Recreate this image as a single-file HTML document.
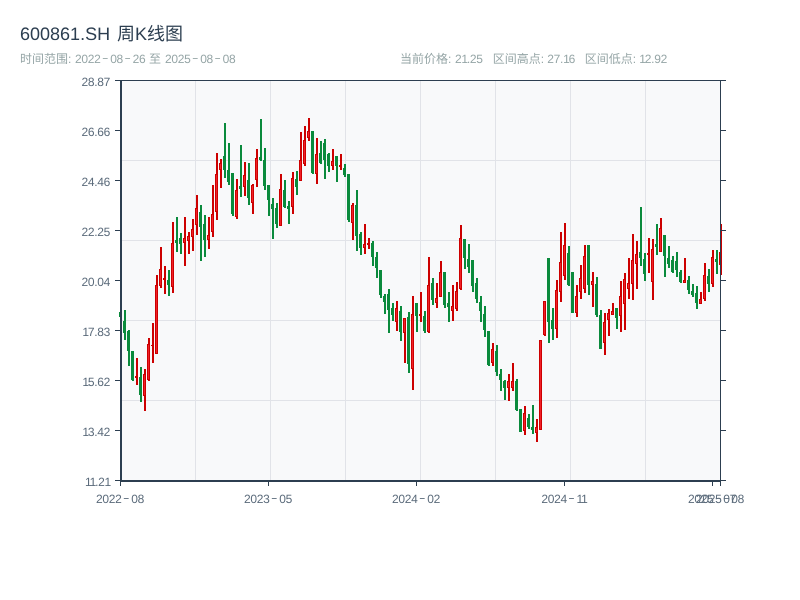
<!DOCTYPE html>
<html><head><meta charset="utf-8">
<style>
html,body{margin:0;padding:0;background:#fff;width:800px;height:600px;overflow:hidden}
svg{display:block}
text{font-family:"Liberation Sans","Noto Sans CJK SC",sans-serif;text-rendering:geometricPrecision}
.n{letter-spacing:-.3px}
.o{letter-spacing:-1.2px}
.h{font-family:"IPAGothic",sans-serif;letter-spacing:2px}
.s{font-size:12px;fill:#95a5a6}
</style></head>
<body>
<svg id="c" xmlns="http://www.w3.org/2000/svg" width="800" height="600" viewBox="0 0 800 600">
<defs><clipPath id="clip"><rect x="118" y="80" width="604" height="402"/></clipPath></defs>
<text x="20" y="40" font-size="18" fill="#2c3e50">600861.SH</text>
<text x="117" y="40" font-size="18" fill="#2c3e50">周K线图</text>
<text x="20" y="63" class="s">时间范围:</text>
<text x="75" y="63" class="s n">2022<tspan class="h" dx="1.7">-</tspan>08<tspan class="h" dx="1.7">-</tspan>26</text>
<text x="149" y="63" class="s">至</text>
<text x="165" y="63" class="s n">2025<tspan class="h" dx="1.7">-</tspan>08<tspan class="h" dx="1.7">-</tspan>08</text>
<text x="400" y="63" class="s">当前价格:</text>
<text x="455" y="63" class="s n">2<tspan class="o">1</tspan>.25</text>
<text x="492.7" y="63" class="s">区间高点:</text>
<text x="547.3" y="63" class="s n">27.<tspan class="o">1</tspan>6</text>
<text x="584.7" y="63" class="s">区间低点:</text>
<text x="639.3" y="63" class="s n"><tspan class="o">1</tspan>2.92</text>
<rect x="120" y="80" width="600" height="400" fill="#f8f9fa"/>
<path d="M120 160.5H720M120 240.5H720M120 320.5H720M120 400.5H720M195.5 80V480M270.5 80V480M345.5 80V480M420.5 80V480M495.5 80V480M570.5 80V480M645.5 80V480" stroke="#e1e3e8" stroke-width="1" fill="none"/>
<g clip-path="url(#clip)">
<path id="gw" stroke="#0a8a3c" stroke-width="2" fill="none"/>
<path id="gb" stroke="#0a8a3c" stroke-width="3" fill="none"/>
<path id="rw" stroke="#cc0000" stroke-width="2" fill="none"/>
<path id="rb" stroke="#cc0000" stroke-width="3" fill="none"/>
<path id="rf" stroke="#f02028" stroke-width="1" fill="none"/>
</g>
<path d="M121 80V481M120 481H720" stroke="#2c3e50" stroke-width="2" fill="none"/>
<path d="M120 80.5H726M720.5 80V482" stroke="#2c3e50" stroke-width="1" fill="none"/>
<path d="M115 80.5H120M115 130.5H120M115 180.5H120M115 230.5H120M115 280.5H120M115 330.5H120M115 380.5H120M115 430.5H120M115 480.5H120M721 130.5H726M721 180.5H726M721 230.5H726M721 280.5H726M721 330.5H726M721 380.5H726M721 430.5H726M721 480.5H726M120.5 482V486M268.5 482V486M416.5 482V486M564.5 482V486M712.5 482V486M720.5 482V486" stroke="#2c3e50" stroke-width="1" fill="none"/>
<g font-size="12" fill="#5a6a7a" text-anchor="end" class="n">
<text x="110" y="86">28.87</text>
<text x="110" y="136">26.66</text>
<text x="110" y="186">24.46</text>
<text x="110" y="236">22.25</text>
<text x="110" y="286">20.04</text>
<text x="110" y="336"><tspan class="o">1</tspan>7.83</text>
<text x="110" y="386"><tspan class="o">1</tspan>5.62</text>
<text x="110" y="436"><tspan class="o">1</tspan>3.42</text>
<text x="110" y="486"><tspan class="o">1</tspan><tspan class="o">1</tspan>.2<tspan class="o">1</tspan></text>
</g>
<g font-size="12" fill="#5a6a7a" text-anchor="middle" class="n">
<text x="120" y="503">2022<tspan class="h" dx="1.7">-</tspan>08</text>
<text x="268" y="503">2023<tspan class="h" dx="1.7">-</tspan>05</text>
<text x="416" y="503">2024<tspan class="h" dx="1.7">-</tspan>02</text>
<text x="564" y="503">2024<tspan class="h" dx="1.7">-</tspan><tspan class="o">1</tspan><tspan class="o">1</tspan></text>
<text x="712" y="503">2025<tspan class="h" dx="1.7">-</tspan>07</text>
<text x="720" y="503">2025<tspan class="h" dx="1.7">-</tspan>08</text>
</g>
</svg>
<script>
var D="G312,317,312,317 G310,340,321,333 G330,366,331,351 G351,381,351,380 R358,385,376,378 G367,402,377,395 R369,411,374,396 R338,381,344,380 R323,363,345,346 R275,354,285,354 R247,288,269,286 R266,294,278,280 G270,296,280,285 R222,293,243,287 G217,252,240,243 G233,254,238,244 R217,266,238,243 R232,254,236,241 R219,251,229,237 R195,235,208,225 G205,261,212,227 G215,257,224,240 R217,249,235,240 R185,237,214,232 R153,220,174,212 R159,188,163,170 G123,178,156,170 G143,185,170,182 G173,216,173,214 R179,219,190,217 G145,197,186,189 R162,196,175,187 G163,205,180,198 R184,214,185,203 R149,187,158,180 G119,161,157,160 G148,190,160,186 G185,216,185,200 G198,239,204,209 G203,228,208,224 R174,226,189,226 G180,208,190,207 G201,224,206,209 R172,214,178,207 G171,195,179,187 R132,181,160,181 R126,166,140,164 R118,141,131,138 G131,174,131,173 R138,184,154,174 G141,164,153,163 G139,179,143,160 G153,172,154,166 R149,170,161,166 G156,182,156,166 R154,170,165,167 G164,177,168,175 G174,222,174,220 R203,240,205,223 G190,251,205,236 G232,255,234,248 R224,254,244,248 R238,249,243,245 G241,266,243,257 G252,278,257,268 G270,298,270,295 G294,314,296,302 G289,333,294,310 G303,321,308,315 R301,331,308,322 G306,341,311,332 R318,363,318,333 G312,373,317,364 R296,390,314,369 G303,332,303,316 R292,322,314,316 G311,333,316,331 R257,333,285,332 G278,305,283,300 R283,308,298,303 R261,297,272,297 G272,308,272,305 G292,322,303,307 R285,321,306,311 R282,311,291,309 R225,290,238,289 G239,269,239,258 G244,273,259,267 G260,292,260,286 G278,303,283,299 G296,322,302,311 G306,337,314,330 G331,366,331,365 R343,366,349,363 G345,376,351,372 G369,391,374,380 G380,400,381,388 R374,401,381,388 R363,391,381,388 G379,411,381,410 G409,432,409,432 R406,435,413,431 G414,429,418,427 G405,434,427,430 R419,442,427,433 R340,430,340,430 R301,336,301,335 G258,343,258,322 G308,340,320,329 R280,338,290,329 R232,302,262,292 R223,280,245,276 G246,286,253,285 G272,313,272,313 R285,317,296,313 R265,299,278,292 R245,293,256,289 G245,295,245,285 R272,307,281,285 G277,317,284,315 G310,349,315,349 R313,355,322,343 R309,336,313,320 R303,315,311,315 G308,329,308,318 R281,332,296,316 R273,330,279,304 R258,299,283,289 R234,300,260,284 R241,289,254,264 G207,266,252,258 G253,281,259,274 R238,273,253,255 R239,300,249,282 G224,255,244,247 R218,252,228,252 G235,277,235,256 G246,268,258,264 G256,273,260,272 G252,277,261,270 G270,283,272,282 R258,283,280,283 G276,294,280,290 G284,297,291,295 G286,309,293,303 R292,304,299,304 R263,301,275,299 G269,292,276,284 R250,287,257,284 G250,274,259,262 R224,275,252,265".split(" ");
var p={gw:"",gb:"",rw:"",rb:"",rf:""};
D.forEach(function(s,i){
  var c=s[0],a=s.slice(1).split(",").map(Number),x=120+4*i;
  var w="M"+(x+1)+" "+a[0]+"V"+a[1];
  var b="M"+(x+.5)+" "+a[2]+"V"+a[3];
  if(c=="G"){p.gw+=w;p.gb+=b;}
  else{p.rw+=w;p.rb+=b;if(a[3]-a[2]>2)p.rf+="M"+(x+.5)+" "+(a[2]+1)+"V"+(a[3]-1);}
});
for(var k in p)document.getElementById(k).setAttribute("d",p[k]);
</script>
</body></html>
